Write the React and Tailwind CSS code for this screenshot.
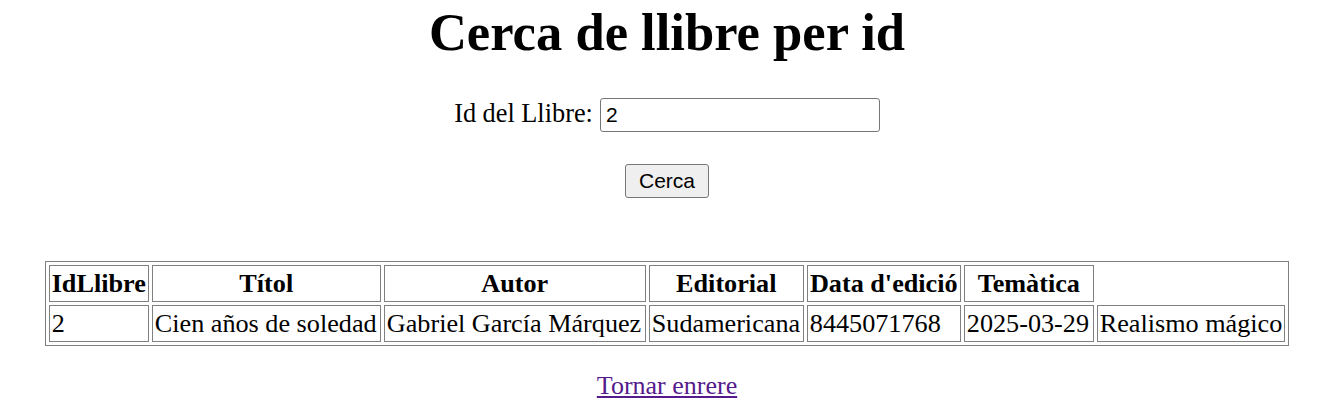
export default function App() {
  const headers = ["IdLlibre", "Títol", "Autor", "Editorial", "Data d'edició", "Temàtica"];
  const row = [
    { text: "2", w: "w-[100px]" },
    { text: "Cien años de soledad", w: "w-[229px]" },
    { text: "Gabriel García Márquez", w: "w-[262px]" },
    { text: "Sudamericana", w: "w-[155px]" },
    { text: "8445071768", w: "w-[154px]" },
    { text: "2025-03-29", w: "w-[130px]" },
    { text: "Realismo mágico", w: "w-[188px]" },
  ];

  return (
    <div className="min-h-screen bg-white text-black text-[26px] text-center font-['Liberation_Serif','Times_New_Roman',serif]">
      <h1 className="pt-[2px] h-[62px] leading-[60px] text-[52.6px] font-bold">Cerca de llibre per id</h1>

      <div className="mt-[36px] flex justify-center items-baseline gap-[7px]">
        <label htmlFor="id" className="leading-[30px] text-[26.3px]">Id del Llibre:</label>
        <input
          id="id"
          type="text"
          defaultValue="2"
          className="w-[280px] h-[34px] pl-[5px] border border-[#767676] rounded-[3px] text-[21px] font-['Liberation_Sans',Arial,sans-serif] outline-none"
        />
      </div>

      <div className="mt-[32px] flex justify-center">
        <button className="w-[84px] h-[34px] bg-[#efefef] border border-[#767676] rounded-[3px] text-[21px] font-['Liberation_Sans',Arial,sans-serif]">
          Cerca
        </button>
      </div>

      <div className="mt-[63px] flex justify-center">
        <table className="border border-[#808080] border-separate border-spacing-[3px] leading-[30px] text-[26.2px]">
          <thead>
            <tr>
              {headers.map((h) => (
                <th key={h} className="h-[37px] px-[2px] py-0 border border-[#808080] font-bold text-center whitespace-nowrap">
                  {h}
                </th>
              ))}
            </tr>
          </thead>
          <tbody>
            <tr>
              {row.map((c) => (
                <td key={c.text} className={`${c.w} h-[37px] px-[2px] py-0 border border-[#808080] text-left whitespace-nowrap`}>
                  {c.text}
                </td>
              ))}
            </tr>
          </tbody>
        </table>
      </div>

      <div className="mt-[25px] leading-[30px]">
        <a href="#" className="text-[#551a8b] underline">Tornar enrere</a>
      </div>
    </div>
  );
}
